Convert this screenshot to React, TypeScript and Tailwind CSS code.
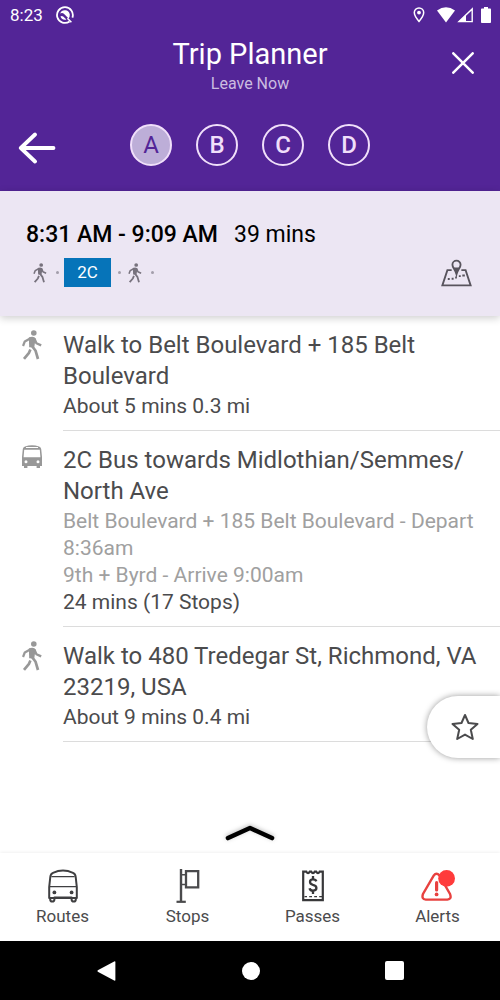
import React from 'react';

interface IconProps {
  className?: string;
}

const WalkIcon: React.FC<IconProps> = ({ className }) => (
  <svg viewBox="0 0 20 30" className={className} fill="none" stroke="currentColor" strokeLinecap="butt" strokeLinejoin="round" aria-hidden="true">
    <circle cx="11.8" cy="3" r="2.8" fill="currentColor" stroke="none" />
    <path d="M6.8 7.6Q10 6 12.8 7.4L13.6 9 12.2 17.6 7.2 17.2Z" fill="currentColor" stroke="none" />
    <path d="M8.6 8.2 2.8 11.4 1 16M12.4 8.4 14.4 13.2 19.2 15.4" strokeWidth="2.3" />
    <path d="M10 16 13.6 20.8 16 29M8.4 19.4 6.8 23.2 2 28.8" strokeWidth="2.7" />
  </svg>
);

const BusIcon: React.FC<IconProps> = ({ className }) => (
  <svg viewBox="0 0 20 23" className={className} fill="currentColor" aria-hidden="true">
    <path
      fillRule="evenodd"
      d="M3 1.4Q10-.8 17 1.4Q19 2 19.2 4L20 12V21H18V23H14.6V21H5.4V23H2V21H0V12L.8 4Q1 2 3 1.4ZM4 2.1V3.1H16V2.1ZM2.2 4.8 1.6 12.2H18.4L17.8 4.8ZM4 15.2A1.5 1.5 0 1 0 4 18.2A1.5 1.5 0 1 0 4 15.2ZM16 15.2A1.5 1.5 0 1 0 16 18.2A1.5 1.5 0 1 0 16 15.2Z"
    />
  </svg>
);

const MapIcon: React.FC<IconProps> = ({ className }) => (
  <svg viewBox="0 0 32 28" className={className} fill="none" stroke="currentColor" strokeWidth="1.9" aria-hidden="true">
    <path d="M11 11H6.6L1.4 26.8H30.6L25.4 11H21" />
    <path d="M16 1.2A4.2 4.2 0 0 0 11.8 5.4C11.8 8.6 14.6 10.2 16 15.4C17.4 10.2 20.2 8.6 20.2 5.4A4.2 4.2 0 0 0 16 1.2Z" />
    <path d="M12.6 8.4H19.4L16 15Z" fill="currentColor" stroke="none" />
    <path d="M7 20.2H9M11 20H13M14.6 18.6H16.4M18.4 17.2H20.4M22 16.6H24.6" strokeWidth="2" />
  </svg>
);

const RoutesIcon = () => (
  <svg viewBox="0 0 30 34" className="h-[34px] w-[30px]" fill="none" stroke="currentColor" strokeWidth="2" strokeLinejoin="round" aria-hidden="true">
    <path d="M5 3.8Q15-.6 25 3.8Q27.4 4.8 27.7 8L28.8 18V29H1.2V18L2.3 8Q2.6 4.8 5 3.8Z" />
    <path d="M3.4 7.6H26.6M1.4 17.6H28.6" strokeWidth="1.4" />
    <path d="M2.2 29V30.5Q2.2 32.6 4.2 32.6Q6.4 32.6 6.4 30.5V28.6H23.6V30.5Q23.6 32.6 25.8 32.6Q27.8 32.6 27.8 30.5V29" />
    <circle cx="6.4" cy="23.4" r="1.9" fill="currentColor" stroke="none" />
    <circle cx="23.6" cy="23.4" r="1.9" fill="currentColor" stroke="none" />
  </svg>
);

const StopsIcon = () => (
  <svg viewBox="0 0 24 34" className="h-[34px] w-[24px]" fill="none" stroke="currentColor" aria-hidden="true">
    <path d="M5 0V32" strokeWidth="2.4" />
    <path d="M.5 32.8H9.8" strokeWidth="2.2" />
    <path d="M5 5.8H10M5 15.4H10" strokeWidth="1.5" />
    <path d="M10 2.2H22.2V18.3H10Z" strokeWidth="2.3" />
  </svg>
);

const PassesIcon = () => (
  <svg viewBox="0 0 22 32" className="h-[32px] w-[22px]" fill="none" stroke="currentColor" aria-hidden="true">
    <path d="M1.2 1.7H4.4Q6 4.6 7.8 1.7H9.2Q11 4.6 12.8 1.7H14.2Q16 4.6 17.6 1.7H20.8V30.2H1.2Z" strokeWidth="2.2" />
    <path d="M2.5 26.6H5M7.2 26.6H10M12.2 26.6H15M17.2 26.6H20" strokeWidth="1.4" />
    <path d="M14.3 11.4Q13.8 9.4 11 9.4Q8 9.4 8 12Q8 14 11 14.8Q14.4 15.6 14.4 18Q14.4 20.6 11 20.6Q8 20.6 7.6 18.2M11 6V9.4M11 20.6V24" strokeWidth="2.3" />
  </svg>
);

const AlertsIcon = () => (
  <svg viewBox="0 0 34 32" className="h-[32px] w-[34px]" fill="none" stroke="currentColor" aria-hidden="true">
    <path d="M12.8 5.4Q15.4 2 18.4 5.4L29 24Q31 29.2 26.4 29.6H4.8Q.2 29.2 2 24Z" strokeWidth="2.4" />
    <path d="M15.6 12.5V20" strokeWidth="3.2" strokeLinecap="round" />
    <circle cx="15.6" cy="24.4" r="1.9" fill="currentColor" stroke="none" />
    <circle cx="25.6" cy="8.4" r="8.4" fill="#ff3b3b" stroke="none" />
  </svg>
);

const steps = [
  {
    icon: 'walk',
    title: 'Walk to Belt Boulevard + 185 Belt Boulevard',
    details: [],
    summary: 'About 5 mins 0.3 mi',
  },
  {
    icon: 'bus',
    title: '2C Bus towards Midlothian/Semmes/\u200BNorth Ave',
    details: ['Belt Boulevard + 185 Belt Boulevard - Depart 8:36am', '9th + Byrd - Arrive 9:00am'],
    summary: '24 mins (17 Stops)',
  },
  {
    icon: 'walk',
    title: 'Walk to 480 Tredegar St, Richmond, VA 23219, USA',
    details: [],
    summary: 'About 9 mins 0.4 mi',
  },
];

const tabs = [
  { label: 'Routes', icon: <RoutesIcon />, color: 'text-[#3f3f41]' },
  { label: 'Stops', icon: <StopsIcon />, color: 'text-[#4a4a4c]' },
  { label: 'Passes', icon: <PassesIcon />, color: 'text-[#38383a]' },
  { label: 'Alerts', icon: <AlertsIcon />, color: 'text-[#e8413f]' },
];

const StatusBar = () => (
  <div className="flex h-[30px] items-center justify-between pl-[10px] pr-[9px]">
    <div className="flex items-center gap-[13px]">
      <span className="text-[17px] leading-[30px]">8:23</span>
      <svg viewBox="0 0 18 18" className="size-[18px]" fill="none" stroke="currentColor" aria-hidden="true">
        <path d="M13.6 15.4A7.9 7.9 0 1 1 16.4 11.6" strokeWidth="1.8" />
        <path d="M4.2 7.6A5 5 0 0 1 13.8 8.4Q13.9 11 12.6 12.4L8.4 8.2Q6.2 6.2 4.2 7.6Z" fill="currentColor" stroke="none" />
        <path d="M4.4 10.6Q5.8 9.2 7.2 10.6L10.4 13.6Q6.4 14.8 4.4 10.6Z" fill="currentColor" stroke="none" />
        <path d="M11.4 12.2 15.4 16.2" strokeWidth="1.6" />
      </svg>
    </div>
    <div className="flex items-center">
      <svg viewBox="0 0 12 16" className="mr-3 h-4 w-3" fill="none" stroke="currentColor" strokeWidth="1.5" aria-hidden="true">
        <path d="M6 .9A4.7 4.7 0 0 0 1.3 5.6C1.3 9 6 14.4 6 14.4S10.7 9 10.7 5.6A4.7 4.7 0 0 0 6 .9Z" />
        <circle cx="6" cy="5.6" r="1.9" fill="currentColor" stroke="none" />
      </svg>
      <svg viewBox="0 0 18 16" className="mr-0.5 h-4 w-[18px]" fill="currentColor" aria-hidden="true">
        <path d="M0 3.6Q9-3 18 3.6L9 15.4Z" />
      </svg>
      <svg viewBox="0 0 16 16" className="mr-2 h-4 w-4" fill="none" stroke="currentColor" strokeWidth="1.4" aria-hidden="true">
        <path d="M15.2 2V14.6H2Z" />
        <path d="M9 7.6V15H1.4Z" fill="currentColor" stroke="none" />
      </svg>
      <svg viewBox="0 0 10 16" className="h-4 w-[10px]" fill="currentColor" aria-hidden="true">
        <path d="M3 0H7V1.6H9.2Q10 1.6 10 2.6V15Q10 16 9.2 16H.8Q0 16 0 15V2.6Q0 1.6.8 1.6H3Z" />
      </svg>
    </div>
  </div>
);

const Header = () => (
  <header className="bg-[#532597] text-white">
    <StatusBar />
    <div className="grid grid-cols-[64px_1fr_64px] items-center pb-7 pr-[5px]">
      <div className="col-start-2 text-center pl-[5px]">
        <h1 className="pt-[7px] text-[29px] leading-[34px]">Trip Planner</h1>
        <p className="text-base leading-[25px] text-[#cbbce0]">Leave Now</p>
      </div>
      <button type="button" aria-label="Close" className="flex justify-center">
        <svg viewBox="0 0 22 22" className="size-[22px]" stroke="currentColor" strokeWidth="2.5" strokeLinecap="round" aria-hidden="true">
          <path d="M1.3 1.3 20.7 20.7M20.7 1.3 1.3 20.7" />
        </svg>
      </button>
    </div>
    <div className="grid grid-cols-[1fr_auto_1fr] items-center pb-[25px]">
      <button type="button" aria-label="Back" className="justify-self-start pl-[18px] pt-[6px]">
        <svg viewBox="0 0 38 32" className="h-8 w-[38px]" fill="none" stroke="currentColor" strokeWidth="3.8" strokeLinecap="round" strokeLinejoin="round" aria-hidden="true">
          <path d="M35.5 16H2.8M17 2.5 2.8 16 17 29.5" />
        </svg>
      </button>
      <div className="flex gap-6">
        {['A', 'B', 'C', 'D'].map((letter) => (
          <button
            key={letter}
            type="button"
            aria-pressed={letter === 'A'}
            className={`flex size-[42px] items-center justify-center rounded-full border-2 border-[#f0dffa] text-2xl ${
              letter === 'A' ? 'bg-[#bdaed8] text-[#532597]' : 'font-medium text-[#f0dffa]'
            }`}
          >
            {letter}
          </button>
        ))}
      </div>
    </div>
  </header>
);

const Dot = () => <span className="size-[3px] rounded-full bg-[#a39eab]"></span>;

const TripSummary = () => (
  <section className="relative flex h-[125px] items-end justify-between bg-[#ece6f3] pb-[29px] pl-[26px] pr-[28px] shadow-[0_2px_8px_rgba(0,0,0,0.2)]">
    <div>
      <p className="text-[23px] leading-8 text-black">
        <span className="mr-4 font-medium">8:31 AM - 9:09 AM</span>
        39 mins
      </p>
      <div className="mt-[7px] flex items-center pl-[7px] text-[#77727d]">
        <WalkIcon className="h-5 w-[14px]" />
        <span className="flex w-[17px] justify-center pl-[3px]"><Dot /></span>
        <span className="flex h-[29px] w-[47px] items-center justify-center bg-[#0674b9] text-[17px] text-white">2C</span>
        <span className="flex w-[17px] justify-center"><Dot /></span>
        <WalkIcon className="h-5 w-[14px]" />
        <span className="flex w-[20px] justify-center"><Dot /></span>
      </div>
    </div>
    <button type="button" aria-label="Show on map" className="text-[#58545d]">
      <MapIcon className="h-7 w-[31px]" />
    </button>
  </section>
);

const StepList = () => (
  <ol className="text-[#4b4b4d]">
    {steps.map((step) => (
      <li key={step.title} className="flex pt-[14px]">
        <div className="flex w-[63px] shrink-0 justify-center text-[#989898]">
          {step.icon === 'walk' ? <WalkIcon className="h-[30px] w-5" /> : <BusIcon className="h-[23px] w-5" />}
        </div>
        <div className="flex-1 border-b border-[#dcdcdc] pb-[10px] pr-3">
          <h2 className="pb-px text-2xl leading-[31px]">{step.title}</h2>
          {step.details.map((line) => (
            <p key={line} className="text-[21px] leading-[27px] text-[#a0a0a0]">{line}</p>
          ))}
          <p className="text-[21px] leading-[27px]">{step.summary}</p>
        </div>
      </li>
    ))}
  </ol>
);

const TabBar = () => (
  <nav className="grid h-[88px] grid-cols-4 bg-white shadow-[0_-1px_3px_rgba(0,0,0,0.06)]">
    {tabs.map((tab) => (
      <a key={tab.label} href={`#${tab.label.toLowerCase()}`} className="flex flex-col items-center pt-4">
        <span className={`flex h-[34px] items-center ${tab.color}`}>{tab.icon}</span>
        <span className="text-[17px] leading-[26px] text-[#4b4b4d]">{tab.label}</span>
      </a>
    ))}
  </nav>
);

const SystemBar = () => (
  <div className="flex h-[59px] items-center justify-center gap-[125px] bg-black text-white">
    <button type="button" aria-label="System back">
      <svg viewBox="0 0 20 20" className="size-5" fill="currentColor" aria-hidden="true">
        <path d="M.8 9.2 17.2.4Q18.4 0 18.4 1V19Q18.4 20 17.2 19.6L.8 10.8Q0 10 .8 9.2Z" />
      </svg>
    </button>
    <button type="button" aria-label="Home" className="size-[18px] rounded-full bg-white"></button>
    <button type="button" aria-label="Recent apps" className="size-[19px] rounded-[2px] bg-white"></button>
  </div>
);

export default function App() {
  return (
    <div className="flex min-h-screen flex-col bg-white font-[Roboto,sans-serif]">
      <Header />
      <TripSummary />
      <main className="relative flex flex-1 flex-col">
        <StepList />
        <button
          type="button"
          aria-label="Add to favorites"
          className="absolute bottom-[95px] right-0 flex h-[62px] w-[73px] items-center rounded-l-full bg-white pl-6 text-[#4b4b4d] shadow-[0_0_6px_rgba(0,0,0,0.4)]"
        >
          <svg viewBox="0 0 28 28" className="size-7" fill="none" stroke="currentColor" strokeWidth="2" strokeLinejoin="round" aria-hidden="true">
            <path d="M14 2 17.5 10 26.5 11 19.8 16.8 21.8 26 14 21.6 6.2 26 8.2 16.8 1.5 11 10.5 10Z" />
          </svg>
        </button>
        <button type="button" aria-label="Expand" className="mt-auto flex justify-center pb-[11px]">
          <svg viewBox="0 0 50 18" className="h-[18px] w-[50px] drop-shadow-[0_-1px_2px_rgba(0,0,0,0.25)]" fill="none" stroke="#000" strokeWidth="4.6" strokeLinecap="round" strokeLinejoin="round" aria-hidden="true">
            <path d="M3 14 25 4 47 14" />
          </svg>
        </button>
      </main>
      <TabBar />
      <SystemBar />
    </div>
  );
}
